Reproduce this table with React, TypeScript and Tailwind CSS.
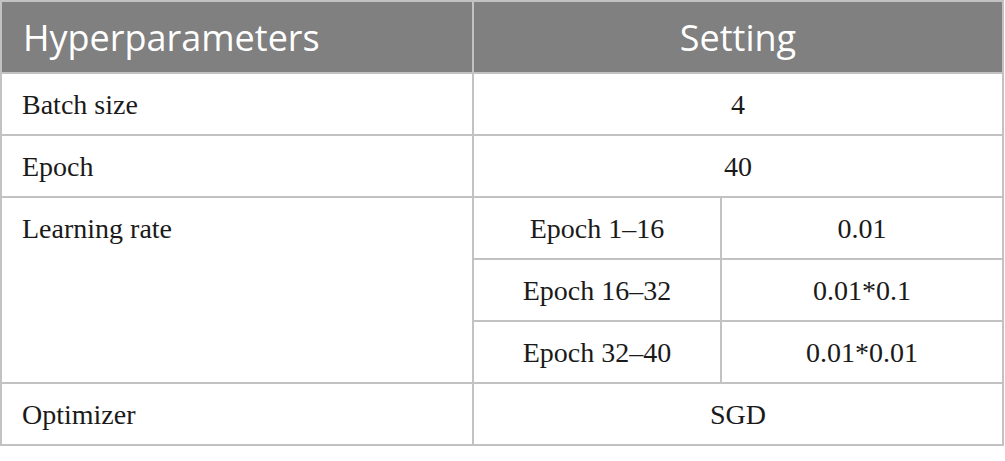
import React from "react";

const serif = "font-['Liberation_Serif',serif]";

function Cell({ children, className = "" }: { children?: React.ReactNode; className?: string }) {
  return (
    <div className={`bg-white h-[60px] flex items-center pt-[2px] text-[28px] text-[#1a1a1a] ${serif} ${className}`}>
      {children}
    </div>
  );
}

export default function App() {
  return (
    <div className="w-[1005px] h-[461px] bg-white">
      <div className="w-[1004px] grid grid-cols-[470px_246px_280px] gap-[2px] p-[2px] bg-[#c2c2c2]">
        <div className="bg-[#7f807f] h-[70px] flex items-center pl-[21px] pt-[2px] text-white text-[36px] font-['Open_Sans',sans-serif]">
          Hyperparameters
        </div>
        <div className="col-span-2 bg-[#7f807f] h-[70px] flex items-center justify-center pt-[2px] text-white text-[36px] font-['Open_Sans',sans-serif]">
          Setting
        </div>

        <Cell className="pl-[20px]">Batch size</Cell>
        <Cell className="col-span-2 justify-center">4</Cell>

        <Cell className="pl-[20px]">Epoch</Cell>
        <Cell className="col-span-2 justify-center">40</Cell>

        <div className={`row-span-3 bg-white text-[28px] text-[#1a1a1a] ${serif}`}>
          <div className="h-[60px] flex items-center pt-[2px] pl-[20px]">Learning rate</div>
        </div>
        <Cell className="justify-center">Epoch 1–16</Cell>
        <Cell className="justify-center">0.01</Cell>
        <Cell className="justify-center">Epoch 16–32</Cell>
        <Cell className="justify-center">0.01*0.1</Cell>
        <Cell className="justify-center">Epoch 32–40</Cell>
        <Cell className="justify-center">0.01*0.01</Cell>

        <Cell className="pl-[20px]">Optimizer</Cell>
        <Cell className="col-span-2 justify-center">SGD</Cell>
      </div>
    </div>
  );
}
